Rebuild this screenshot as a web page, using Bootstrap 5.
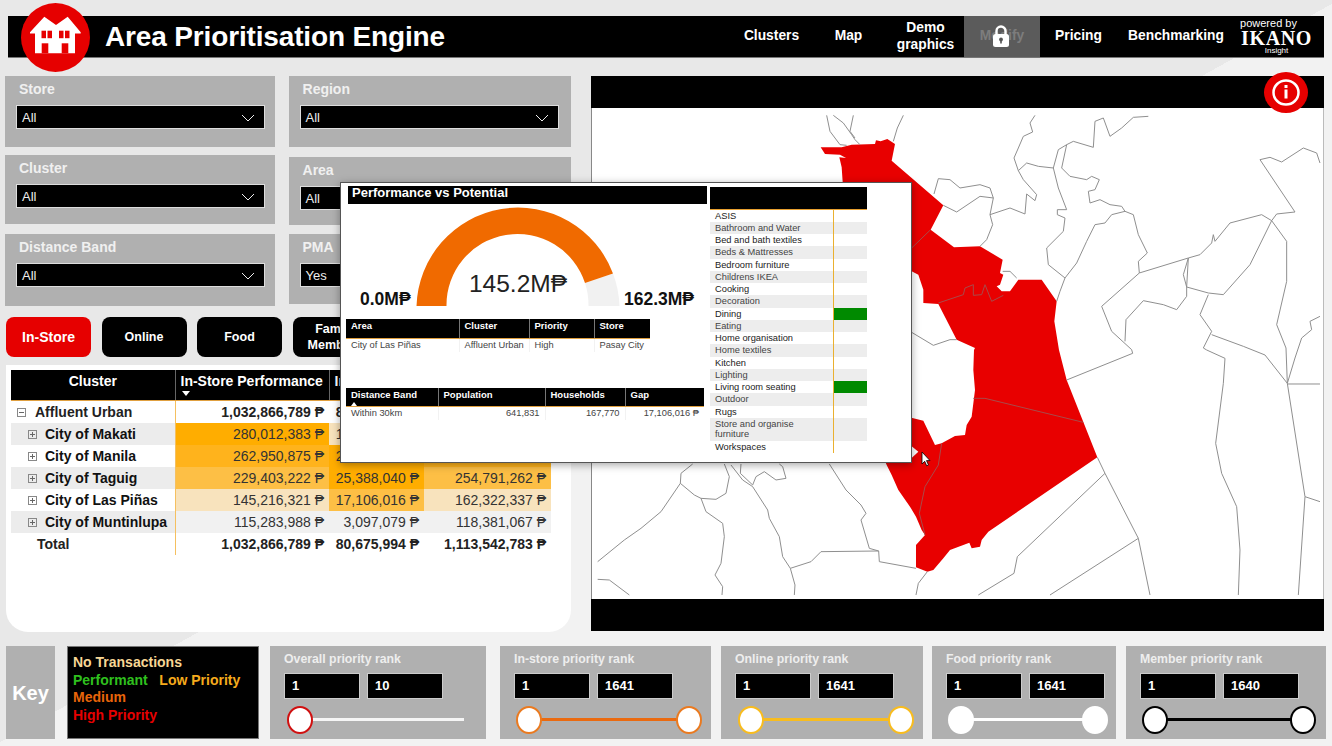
<!doctype html>
<html lang="en">
<head>
<meta charset="utf-8">
<title>Area Prioritisation Engine</title>
<link href="https://cdn.jsdelivr.net/npm/bootstrap@5.3.0/dist/css/bootstrap.min.css" rel="stylesheet">
<style>
html,body{margin:0;height:746px;overflow:hidden}
body{width:1332px;position:relative;font-family:"Liberation Sans",Arial,sans-serif;color:#222;background:linear-gradient(151deg,#e8e8e8 50%,#f2f2f2 50%)}
.topbar{margin:16px 8px 0;height:42px;background:#000;color:#fff;border-bottom:1px solid #777}
.brand-mark{width:69px;height:69px;margin:-13px 0 -14px 13px;flex:none}
.brand-title{font-size:28px;letter-spacing:-.15px;font-weight:700;margin-left:15px;line-height:40px;white-space:nowrap}
.nav-cell{width:77px;height:41px;font-size:13.8px;font-weight:700;line-height:16.5px;text-align:center;color:#fff}
.nav-cell.wide{width:118px}
.nav-locked{width:76px;background:#5b5b5b;color:#7d7d7d;position:relative}
.lock{position:absolute;left:29px;top:9px;width:16px;height:22px}
.ikano{width:89px;height:41px;padding-left:4px;color:#fff;text-align:center}
.ikano .pw{font-size:11px;line-height:11px;margin-top:2px;margin-right:26px}
.ikano .nm{font-family:"Liberation Serif",serif;font-weight:700;font-size:20px;letter-spacing:.6px;line-height:18px;margin-right:10px}
.ikano .in{font-size:8px;line-height:8px;margin-right:10px;margin-top:0}
.main-row{margin-top:18px;height:555px}
.left-col{width:566px;margin-left:5px;flex:none}
.filter-cols{gap:14px}
.fc-a{width:270px}.fc-b{width:283px}
.filter{background:#b0b0b0;position:relative;color:#f0f0f0;font-size:14px;font-weight:700;padding-left:11px}
.f1{height:71px}.f2{height:69px;margin-top:8px}.f3{height:72px;margin-top:10px}
.f4{height:71px}.f5{height:68px;margin-top:10px}.f6{height:70px;margin-top:9px}
.filter .lab{display:block;height:29px;line-height:26px;padding-left:3px}
.pick{height:24px;width:249px;background:#000;color:#eee;border:1px solid #ddd;font-weight:400;font-size:13px;line-height:22px;padding:1px 9px 0 5px}
.fc-b .pick{width:259px}
.seg-row{gap:10.5px;margin:11px 0 0 1px}
.seg{width:85px;height:40px;padding:0;background:#000;color:#fff;border:0;border-radius:8px;font-size:12.5px;font-weight:700;line-height:16px}
.seg:hover{background:#000;color:#fff}
.seg.on,.seg.on:hover{background:#e60000;font-size:14px}
.panel{margin:8px 0 0 1px;height:267px;width:565px;background:#fff;border-radius:0 0 22px 22px;padding:5px}
.panel .table{width:540px;table-layout:fixed;margin:0;font-size:14px;border-color:transparent;--bs-table-bg:transparent}
.panel th,.panel td{padding:0 5px!important;height:22px;line-height:22px;border:0;color:#333;white-space:nowrap;overflow:hidden}
.panel thead th{--bs-table-bg:#000;color:#fff;height:30px;line-height:17px;vertical-align:top;padding-top:3px!important;border-bottom:1px solid #e0a040;border-left:1px solid #666;font-weight:700;position:relative}
.panel thead th:first-child{border-left:0;text-align:center}
.panel td:first-child{font-weight:700;color:#111}
.panel td:nth-child(2){border-left:1px solid #f5c060}
.panel td.v{text-align:right}
.panel tr.bd td{font-weight:700;color:#222}
.lv0{display:inline-block;width:9px;height:9px;margin:0 9px 0 1px}
.lv1{display:inline-block;width:9px;height:9px;margin:0 8px 0 12px}
.tot{display:inline-block;margin-left:21px}
.alt{--bs-table-bg:#ececec}
.h1c{--bs-table-bg:#ffad00}.h2c{--bs-table-bg:#ffb31c}.h3c{--bs-table-bg:#fdbf45}.h4c{--bs-table-bg:#f8e3bd}.h5c{--bs-table-bg:#f1f1f1}
.sort{position:absolute;left:6px;top:21px;width:0;height:0;border:4.5px solid transparent;border-top:5px solid #fff;border-bottom:0}
.map-col{width:733px;margin-left:20px;flex:none;position:relative;height:555px}
.map-bar{height:32px;background:#000}
.map-body{height:491px;background:#fff;border-right:1px solid #bbb;border-left:1px solid #888}
.map-body svg{display:block;width:100%;height:100%}
.map-body polyline{vector-effect:non-scaling-stroke;fill:none;stroke:#8f8f8f;stroke-width:1;stroke-linejoin:round}
.map-body .in-red polyline{stroke:#a84a4a}
.info{position:absolute;left:673px;top:-4px;width:44px;height:41px}
.bottom{margin-top:15px;height:93px}
.keylab{width:49px;height:93px;margin-left:6px;background:#b0b0b0;color:#fff;font-size:20px;font-weight:700}
.legend{width:192px;height:93px;margin-left:12px;background:#000;border:1px solid #777;padding:7px 5px;font-size:14px;font-weight:700;line-height:17.7px;white-space:nowrap}
.rank{height:93px;background:#b0b0b0;color:#eee;font-size:12.3px;font-weight:700;padding:5px 14px 0;position:relative}
.rank .ttl{height:22px;line-height:16px;white-space:nowrap}
.rank .boxes{gap:7px}
.rank .box{width:76px;flex:none;height:26px;background:#000;color:#fff;border:1px solid #ccc;line-height:24px;padding-left:7px;font-size:13px}
.track{position:relative;height:28px;margin-top:7px}
.track i{position:absolute;left:10px;right:10px;top:12px;height:3px;background:var(--tc)}
.track.open i{right:0}
.track b{position:absolute;top:0;width:26px;height:28px;border-radius:50%;background:#fff;border:2px solid var(--tb)}
.track b.l{left:0}.track b.r{right:0}
.popup{position:absolute;left:340px;top:182px;width:572px;height:281px;background:#fff;border:1px solid #555;box-shadow:0 2px 8px rgba(0,0,0,.35);padding:3px 0 0 5px;gap:2px}
.pop-left{width:362px;flex:none}
.pop-title{margin-left:2px;width:359px;height:18px;background:#000;color:#fff;font-size:13px;font-weight:700;line-height:14px;padding-left:4px}
.gauge-row{height:102px;position:relative}
.gauge-row svg{position:absolute;left:70px;top:0;width:204px;height:102px}
.g-val{position:absolute;left:70px;width:204px;top:65px;text-align:center;font-size:24.5px;line-height:30px;color:#222}
.g-min,.g-max{position:absolute;top:85px;font-size:17.5px;line-height:20px;font-weight:700;color:#111}
.g-min{left:14px}.g-max{left:278px}
.mini{table-layout:fixed;font-size:9.3px;margin:0;--bs-table-bg:transparent;border-color:transparent}
.mini th,.mini td{padding:0 5px!important;white-space:nowrap;overflow:hidden;border:0;color:#444}
.mini th{--bs-table-bg:#000;color:#fff;height:19px;line-height:13px;vertical-align:top;padding-top:0!important;border-bottom:1px solid #e0a040;border-left:1px solid #777;font-size:9.5px;position:relative}
.mini th:first-child{border-left:0}
.mini td{height:13px;line-height:13px;border-left:1px solid #f2f2f2}
.mini td:first-child{border-left:0}
.mini td.v{text-align:right}
.m1{width:304px;margin-top:13px!important}
.m2{width:358px;margin-top:36px!important}
.tri{position:absolute;left:5px;top:14px;width:0;height:0;border:3px solid transparent;border-bottom:4px solid #fff;border-top:0}
.cats{width:157px;flex:none;padding-top:1px;font-size:9.3px;color:#222}
.cats .hd{height:22.5px;background:#000;border-bottom:1px solid #e8a030;width:157px}
.cat{display:flex;height:12.27px;line-height:12.27px}
.cat .n{width:123px;padding-left:5px;flex:none;white-space:nowrap}
.cat .c{width:34px;border-left:1px solid #eab030;flex:none}
.cat:nth-child(even) .n,.cat:nth-child(even) .c{background:#ededed}
.cat:nth-child(even) .n{color:#444}
.cat .c.g{background:#008a00}
.cat.two{height:23px;line-height:10.3px}
.cat.two .n{padding-top:1px}
.cursor{position:absolute;left:921px;top:451px;width:10px;height:16px}
</style>
</head>
<body>
<header class="topbar d-flex align-items-center">
  <svg class="brand-mark" viewBox="0 0 69 69" aria-hidden="true">
    <circle cx="34.500" cy="34.500" r="34.500" fill="#e60000"/>
    <path fill="#fff" d="M9 29.300 23.300 13.700 35 22 46.700 13.700 59.700 29.300V30.500H54V50.300H14V30.500H9z"/>
    <rect x="20.500" y="27.700" width="4.500" height="7.500" fill="#e60000"/><rect x="26.500" y="27.700" width="4.500" height="7.500" fill="#e60000"/>
    <rect x="38" y="27.700" width="4.500" height="7.500" fill="#e60000"/><rect x="44" y="27.700" width="4.500" height="7.500" fill="#e60000"/>
    <rect x="20.700" y="40.300" width="6.600" height="10" fill="#e60000"/><rect x="40.700" y="40.300" width="6.600" height="10" fill="#e60000"/>
  </svg>
  <div class="brand-title">Area Prioritisation Engine</div>
  <nav class="d-flex ms-auto align-items-stretch">
    <div class="nav-cell d-flex align-items-center justify-content-center">Clusters</div>
    <div class="nav-cell d-flex align-items-center justify-content-center">Map</div>
    <div class="nav-cell d-flex align-items-center justify-content-center">Demo<br>graphics</div>
    <div class="nav-cell nav-locked d-flex align-items-center justify-content-center">Modify
      <svg class="lock" viewBox="0 0 16 22" aria-hidden="true"><path d="M3.500 10V6a4.500 4.500 0 0 1 9 0v4" fill="none" stroke="#fff" stroke-width="2.400"/><rect x="0" y="9" width="16" height="13" rx="2.500" fill="#fff"/><circle cx="8" cy="14.500" r="1.900" fill="#555"/><rect x="7.200" y="14.500" width="1.600" height="4" fill="#555"/></svg>
    </div>
    <div class="nav-cell d-flex align-items-center justify-content-center">Pricing</div>
    <div class="nav-cell wide d-flex align-items-center justify-content-center">Benchmarking</div>
    <div class="ikano"><div class="pw">powered by</div><div class="nm">IKANO</div><div class="in">Insight</div></div>
  </nav>
</header>

<div class="main-row d-flex">
  <div class="left-col">
    <div class="filter-cols d-flex">
      <div class="fc-a">
        <div class="filter f1"><span class="lab">Store</span><div class="pick d-flex justify-content-between align-items-center">All<svg width="14" height="8" viewBox="0 0 14 8"><path d="M1 1l6 6 6-6" fill="none" stroke="#eee"/></svg></div></div>
        <div class="filter f2"><span class="lab">Cluster</span><div class="pick d-flex justify-content-between align-items-center">All<svg width="14" height="8" viewBox="0 0 14 8"><path d="M1 1l6 6 6-6" fill="none" stroke="#eee"/></svg></div></div>
        <div class="filter f3"><span class="lab">Distance Band</span><div class="pick d-flex justify-content-between align-items-center">All<svg width="14" height="8" viewBox="0 0 14 8"><path d="M1 1l6 6 6-6" fill="none" stroke="#eee"/></svg></div></div>
      </div>
      <div class="fc-b">
        <div class="filter f4"><span class="lab">Region</span><div class="pick d-flex justify-content-between align-items-center">All<svg width="14" height="8" viewBox="0 0 14 8"><path d="M1 1l6 6 6-6" fill="none" stroke="#eee"/></svg></div></div>
        <div class="filter f5"><span class="lab">Area</span><div class="pick d-flex justify-content-between align-items-center">All<svg width="14" height="8" viewBox="0 0 14 8"><path d="M1 1l6 6 6-6" fill="none" stroke="#eee"/></svg></div></div>
        <div class="filter f6"><span class="lab">PMA</span><div class="pick d-flex justify-content-between align-items-center">Yes<svg width="14" height="8" viewBox="0 0 14 8"><path d="M1 1l6 6 6-6" fill="none" stroke="#eee"/></svg></div></div>
      </div>
    </div>
    <div class="seg-row d-flex">
      <button class="btn seg on" type="button">In-Store</button>
      <button class="btn seg" type="button">Online</button>
      <button class="btn seg" type="button">Food</button>
      <button class="btn seg" type="button">Family<br>Members</button>
    </div>
    <div class="panel">
      <table class="table">
        <colgroup><col style="width:164px"><col style="width:154px"><col style="width:95px"><col style="width:127px"></colgroup>
        <thead><tr><th>Cluster</th><th>In-Store Performance<span class="sort"></span></th><th>In-Store Gap</th><th>In-Store Potential</th></tr></thead>
        <tbody>
          <tr class="bd"><td><svg class="lv0" viewBox="0 0 9 9"><rect x=".5" y=".5" width="8" height="8" fill="none" stroke="#888"/><path d="M2 4.500h5" stroke="#666"/></svg>Affluent Urban</td><td class="v">1,032,866,789 ₱</td><td class="v">80,675,994 ₱</td><td class="v">1,113,542,783 ₱</td></tr>
          <tr><td class="alt"><svg class="lv1" viewBox="0 0 9 9"><rect x=".5" y=".5" width="8" height="8" fill="none" stroke="#888"/><path d="M2 4.500h5M4.500 2v5" stroke="#666"/></svg>City of Makati</td><td class="v h1c">280,012,383 ₱</td><td class="v h4c">12,345,678 ₱</td><td class="v h1c">292,358,061 ₱</td></tr>
          <tr><td><svg class="lv1" viewBox="0 0 9 9"><rect x=".5" y=".5" width="8" height="8" fill="none" stroke="#888"/><path d="M2 4.500h5M4.500 2v5" stroke="#666"/></svg>City of Manila</td><td class="v h2c">262,950,875 ₱</td><td class="v h1c">22,739,181 ₱</td><td class="v h2c">285,690,056 ₱</td></tr>
          <tr><td class="alt"><svg class="lv1" viewBox="0 0 9 9"><rect x=".5" y=".5" width="8" height="8" fill="none" stroke="#888"/><path d="M2 4.500h5M4.500 2v5" stroke="#666"/></svg>City of Taguig</td><td class="v h3c">229,403,222 ₱</td><td class="v h1c">25,388,040 ₱</td><td class="v h3c">254,791,262 ₱</td></tr>
          <tr><td><svg class="lv1" viewBox="0 0 9 9"><rect x=".5" y=".5" width="8" height="8" fill="none" stroke="#888"/><path d="M2 4.500h5M4.500 2v5" stroke="#666"/></svg>City of Las Piñas</td><td class="v h4c">145,216,321 ₱</td><td class="v h3c">17,106,016 ₱</td><td class="v h4c">162,322,337 ₱</td></tr>
          <tr><td class="alt"><svg class="lv1" viewBox="0 0 9 9"><rect x=".5" y=".5" width="8" height="8" fill="none" stroke="#888"/><path d="M2 4.500h5M4.500 2v5" stroke="#666"/></svg>City of Muntinlupa</td><td class="v h5c">115,283,988 ₱</td><td class="v h5c">3,097,079 ₱</td><td class="v h5c">118,381,067 ₱</td></tr>
          <tr class="bd"><td><span class="tot">Total</span></td><td class="v">1,032,866,789 ₱</td><td class="v">80,675,994 ₱</td><td class="v">1,113,542,783 ₱</td></tr>
        </tbody>
      </table>
    </div>
  </div>

  <div class="map-col">
    <div class="map-bar"></div>
    <div class="map-body">
      <svg viewBox="592 108 731 491" preserveAspectRatio="none" aria-hidden="true">
        <g transform="translate(810 108) scale(.33333)">
          <path fill="#e80000" d="M32 118 95 118 125 110 195 108 198 97 212 100 232 93 255 108 245 158 400 292 362 365 432 418 510 415 578 455 570 495 580 500 570 530 560 535 575 550 600 550 625 515 695 515 740 580 733 640 747 726 770 816 862 1048 535 1271 515 1296 510 1316 485 1321 478 1304 420 1326 400 1351 370 1386 352 1391 318 1378 318 1311 345 1281 335 1266 318 1226 300 1196 265 1146 245 1101 230 1071 200 1000 200 930 304 929 340 938 375 1011 395 1006 435 984 465 981 470 951 485 926 495 846 490 786 492 726 495 720 440 695 385 588 340 585 340 545 325 500 305 490 250 400 100 300 98 222 95 178 88 148 108 150 90 140 45 138z"/>
          <path fill="#fff" d="M304 1014 325 1031 304 1051z"/>
          <g class="in-red">
            <polyline points="362,365 305,420"/>
            <polyline points="385,585 460,560 465,540 490,530 490,562 515,560 525,530 545,580 580,562"/>
            <polyline points="490,871 525,871 820,943"/>
            <polyline points="395,1006 385,1071 345,1136 328,1216 345,1281"/>
          </g>
          <polyline points="50,22 60,70 90,110 110,112"/>
          <polyline points="70,22 100,45 125,80 135,95 150,110"/>
          <polyline points="130,22 120,70 135,90"/>
          <polyline points="280,22 262,60 250,100"/>
          <polyline points="675,22 660,45 668,72 640,85 625,120 612,150 625,188 650,165 685,175 730,180 745,125 770,110 790,100 850,118 855,40 880,30 900,85 935,60 970,28 1015,25"/>
          <polyline points="770,110 755,180 780,205 830,215 845,205 868,215 855,245 835,250 840,285 870,275 900,290 935,295 945,310 970,320 985,380 1012,435 985,460 988,495"/>
          <polyline points="730,180 745,240 770,305 742,305 742,320 765,330 760,370 710,420 715,470 765,510 800,465 830,400 855,350 885,345 905,320 945,310"/>
          <polyline points="625,188 640,215 680,260 675,278 650,258 645,318 600,300 540,320 550,270 540,240 510,230 450,240 420,215 385,212 372,258"/>
          <polyline points="550,270 510,265 440,312 400,292"/>
          <polyline points="540,320 548,350 530,395 510,415"/>
          <polyline points="765,510 750,550 740,580"/>
          <polyline points="578,490 600,490 620,510"/>
          <polyline points="988,495 1135,450 1170,440 1205,405 1210,380 1215,400 1260,345 1355,320 1385,338 1400,318 1455,312 1350,155 1380,148 1415,162 1480,120 1520,135 1530,165"/>
          <polyline points="1385,338 1320,470 1240,560 1195,555 1130,537 1135,450"/>
          <polyline points="1130,537 1120,500 1135,450"/>
          <polyline points="988,495 875,595 905,670 965,725 968,736 770,816"/>
          <polyline points="945,700 948,635 1000,578 1060,590 1100,605 1130,565 1130,537"/>
          <polyline points="1195,560 1170,620 1205,670 1180,720 1190,726 1245,751 1240,826 1217,1006 1235,1096 1280,1196 1290,1326 1285,1461"/>
          <polyline points="1205,680 1300,715 1365,741 1432,826"/>
          <polyline points="1385,338 1430,400 1430,520 1400,650 1428,720 1432,826"/>
          <polyline points="1530,625 1500,640 1505,665 1475,690 1455,750 1432,826"/>
          <polyline points="1432,828 1530,828"/>
          <polyline points="1432,826 1485,1166 1465,1461"/>
          <polyline points="1485,1166 1530,1181"/>
          <polyline points="862,1048 885,1096 985,1291 1020,1461"/>
          <polyline points="985,1291 720,1461"/>
          <polyline points="885,1096 622,1346 612,1396 505,1461"/>
          <polyline points="305,673 370,712 420,695 440,695"/>
          <polyline points="352,1391 325,1426 318,1461"/>
        </g>
        <g transform="translate(591 440) scale(.33333)">
          <polyline points="305,72 270,100 268,130 310,165 330,175 375,178 405,160 415,110 400,72"/>
          <polyline points="268,130 210,215 150,265 100,300 20,365"/>
          <polyline points="330,175 345,215 395,250 400,290 390,370 372,405 395,440 393,465"/>
          <polyline points="420,75 455,120 485,140 530,210 535,235 565,290 575,350 598,385 612,435 610,465"/>
          <polyline points="450,72 448,100 485,135 495,110 520,95 555,120 585,115 575,80 565,72"/>
          <polyline points="715,72 765,150 810,195 825,220 810,240 835,325 863,333 865,365 975,385"/>
          <polyline points="598,385 660,365 690,335 863,333"/>
          <polyline points="20,418 55,420 115,465"/>
        </g>
      </svg>
    </div>
    <div class="map-bar"></div>
    <svg class="info" viewBox="0 0 44 41" aria-hidden="true"><ellipse cx="22" cy="20.500" rx="22" ry="20.500" fill="#e60000"/><ellipse cx="22" cy="20.500" rx="12.500" ry="12" fill="none" stroke="#fff" stroke-width="2.500"/><rect x="20.500" y="17.500" width="3" height="9" fill="#fff"/><rect x="20.500" y="13" width="3" height="3" fill="#fff"/></svg>
  </div>
</div>

<div class="bottom d-flex">
  <div class="keylab d-flex align-items-center justify-content-center">Key</div>
  <div class="legend">
    <div style="color:#f7d795">No Transactions</div>
    <div><span style="color:#2fc01e">Performant</span>&nbsp;&nbsp; <span style="color:#f5ab1c">Low Priority</span></div>
    <div style="color:#e8650a">Medium</div>
    <div style="color:#e60000">High Priority</div>
  </div>
  <div class="rank" style="width:216px;margin-left:11px;--tc:#f5f5f5;--tb:#d01010">
    <div class="ttl">Overall priority rank</div>
    <div class="boxes d-flex"><div class="box">1</div><div class="box">10</div></div>
    <div class="track open" style="margin-left:3px;width:177px"><i></i><b class="l"></b></div>
  </div>
  <div class="rank" style="width:211px;margin-left:14px;--tc:#ea6a10;--tb:#ea7a20">
    <div class="ttl">In-store priority rank</div>
    <div class="boxes d-flex"><div class="box">1</div><div class="box">1641</div></div>
    <div class="track" style="margin-left:2px;width:186px"><i></i><b class="l"></b><b class="r"></b></div>
  </div>
  <div class="rank" style="width:202px;margin-left:10px;--tc:#f8bc1e;--tb:#f8bc1e">
    <div class="ttl">Online priority rank</div>
    <div class="boxes d-flex"><div class="box">1</div><div class="box">1641</div></div>
    <div class="track" style="margin-left:3px;width:176px"><i></i><b class="l"></b><b class="r"></b></div>
  </div>
  <div class="rank" style="width:184px;margin-left:9px;--tc:#fff;--tb:#fff">
    <div class="ttl">Food priority rank</div>
    <div class="boxes d-flex"><div class="box">1</div><div class="box">1641</div></div>
    <div class="track" style="margin-left:2px;width:160px"><i></i><b class="l"></b><b class="r"></b></div>
  </div>
  <div class="rank" style="width:200px;margin-left:10px;--tc:#000;--tb:#000">
    <div class="ttl">Member priority rank</div>
    <div class="boxes d-flex"><div class="box">1</div><div class="box">1640</div></div>
    <div class="track" style="margin-left:2px;width:174px"><i></i><b class="l"></b><b class="r"></b></div>
  </div>
</div>

<div class="popup d-flex">
  <div class="pop-left">
    <div class="pop-title">Performance vs Potential</div>
    <div class="gauge-row">
      <svg viewBox="0 0 204 102" aria-hidden="true">
        <path fill="#f1f1f1" d="M197 69.500A101.500 101.500 0 0 1 203.500 102H172.500A71 71 0 0 0 169 79z"/>
        <path fill="#f06a00" d="M.5 102A101.500 101.500 0 0 1 197 69.500L169 79A71 71 0 0 0 30.500 102z"/>
      </svg>
      <div class="g-val">145.2M₱</div>
      <div class="g-min">0.0M₱</div>
      <div class="g-max">162.3M₱</div>
    </div>
    <table class="table mini m1">
      <colgroup><col style="width:113px"><col style="width:70px"><col style="width:65px"><col style="width:56px"></colgroup>
      <thead><tr><th>Area</th><th>Cluster</th><th>Priority</th><th>Store</th></tr></thead>
      <tbody><tr><td>City of Las Piñas</td><td>Affluent Urban</td><td>High</td><td>Pasay City</td></tr></tbody>
    </table>
    <table class="table mini m2">
      <colgroup><col style="width:92px"><col style="width:107px"><col style="width:80px"><col style="width:79px"></colgroup>
      <thead><tr><th>Distance Band<span class="tri"></span></th><th>Population</th><th>Households</th><th>Gap</th></tr></thead>
      <tbody><tr><td>Within 30km</td><td class="v">641,831</td><td class="v">167,770</td><td class="v">17,106,016 ₱</td></tr></tbody>
    </table>
  </div>
  <div class="cats">
    <div class="hd"></div>
    <div>
      <div class="cat"><div class="n">ASIS</div><div class="c"></div></div>
      <div class="cat"><div class="n">Bathroom and Water</div><div class="c"></div></div>
      <div class="cat"><div class="n">Bed and bath textiles</div><div class="c"></div></div>
      <div class="cat"><div class="n">Beds &amp; Mattresses</div><div class="c"></div></div>
      <div class="cat"><div class="n">Bedroom furniture</div><div class="c"></div></div>
      <div class="cat"><div class="n">Childrens IKEA</div><div class="c"></div></div>
      <div class="cat"><div class="n">Cooking</div><div class="c"></div></div>
      <div class="cat"><div class="n">Decoration</div><div class="c"></div></div>
      <div class="cat"><div class="n">Dining</div><div class="c g"></div></div>
      <div class="cat"><div class="n">Eating</div><div class="c"></div></div>
      <div class="cat"><div class="n">Home organisation</div><div class="c"></div></div>
      <div class="cat"><div class="n">Home textiles</div><div class="c"></div></div>
      <div class="cat"><div class="n">Kitchen</div><div class="c"></div></div>
      <div class="cat"><div class="n">Lighting</div><div class="c"></div></div>
      <div class="cat"><div class="n">Living room seating</div><div class="c g"></div></div>
      <div class="cat"><div class="n">Outdoor</div><div class="c"></div></div>
      <div class="cat"><div class="n">Rugs</div><div class="c"></div></div>
      <div class="cat two"><div class="n">Store and organise<br>furniture</div><div class="c"></div></div>
      <div class="cat"><div class="n">Workspaces</div><div class="c"></div></div>
    </div>
  </div>
</div>
<svg class="cursor" viewBox="0 0 10 16" aria-hidden="true"><path d="M1 1v12l2.700-2.700 2 4.500 1.800-.8-2-4.400H9z" fill="#fff" stroke="#000" stroke-width=".8"/></svg>
<script src="https://cdn.jsdelivr.net/npm/bootstrap@5.3.0/dist/js/bootstrap.bundle.min.js"></script>
</body>
</html>
